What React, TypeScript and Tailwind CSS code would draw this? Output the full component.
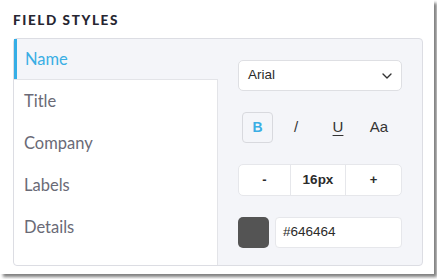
import { ChevronDown } from "lucide-react";

const items = ["Title", "Company", "Labels", "Details"];

export default function App() {
  return (
    <div className="h-[279px] w-[437px] bg-white">
      <div className="h-[274px] w-[434px] bg-white shadow-[3px_3px_3px_rgba(0,0,0,0.5)] px-[13px] pt-[13px] font-['Lato',sans-serif]">
        <h2 className="h-[25px] text-[13.5px] font-black uppercase tracking-[1.6px] text-[#262631] leading-[14px]">
          Field Styles
        </h2>
        <div className="flex h-[228px] w-[410px] rounded-[4px] border border-[#dcdde3] bg-[#f4f5f9]">
          <div className="flex w-[204px] flex-col">
            <div className="flex h-[40px] items-center border-l-[3px] border-[#35aee6] pl-[8px] text-[16.5px] text-[#3aaee4]">
              Name
            </div>
            <div className="flex flex-1 flex-col rounded-bl-[4px] border-t border-r border-[#e3e4e8] bg-white">
              {items.map((item) => (
                <div key={item} className="flex h-[42px] items-center pl-[10px] text-[16.5px] text-[#6a6a76]">
                  {item}
                </div>
              ))}
            </div>
          </div>
          <div className="flex flex-1 flex-col gap-[21px] px-[20px] pt-[21px] font-['Liberation_Sans',sans-serif] text-[13px] text-[#2b2b2b]">
            <div className="flex h-[31px] items-center justify-between rounded-[5px] border border-[#dedfe3] bg-white pl-[9px] pr-[6px]">
              <span className="text-[13.5px]">Arial</span>
              <ChevronDown size={16} strokeWidth={2} className="text-[#333]" />
            </div>
            <div className="flex h-[31px] items-center pl-[4px]">
              <div className="flex h-[31px] w-[31px] items-center justify-center rounded-[4px] border border-[#d8d9de] text-[14px] font-bold text-[#3aaee4]">
                B
              </div>
              <div className="flex h-[31px] w-[46px] items-center justify-center text-[15px] text-[#333]">/</div>
              <div className="flex h-[31px] w-[38px] items-center justify-center text-[15px] text-[#333] underline underline-offset-[3px]">U</div>
              <div className="flex h-[31px] w-[44px] items-center justify-center text-[15px] text-[#333]">Aa</div>
            </div>
            <div className="flex h-[32px] rounded-[5px] border border-[#e6e7eb] bg-white">
              <div className="flex w-[52px] items-center justify-center border-r border-[#e6e7eb] font-bold">-</div>
              <div className="flex w-[55px] items-center justify-center border-r border-[#e6e7eb] text-[13.5px] font-bold">16px</div>
              <div className="flex flex-1 items-center justify-center font-bold">+</div>
            </div>
            <div className="flex h-[31px] gap-[6px]">
              <div className="h-[31px] w-[31px] rounded-[5px] bg-[#545454]" />
              <div className="flex flex-1 items-center rounded-[4px] border border-[#e6e7eb] bg-white pl-[7px] text-[13.5px]">#646464</div>
            </div>
          </div>
        </div>
      </div>
    </div>
  );
}
